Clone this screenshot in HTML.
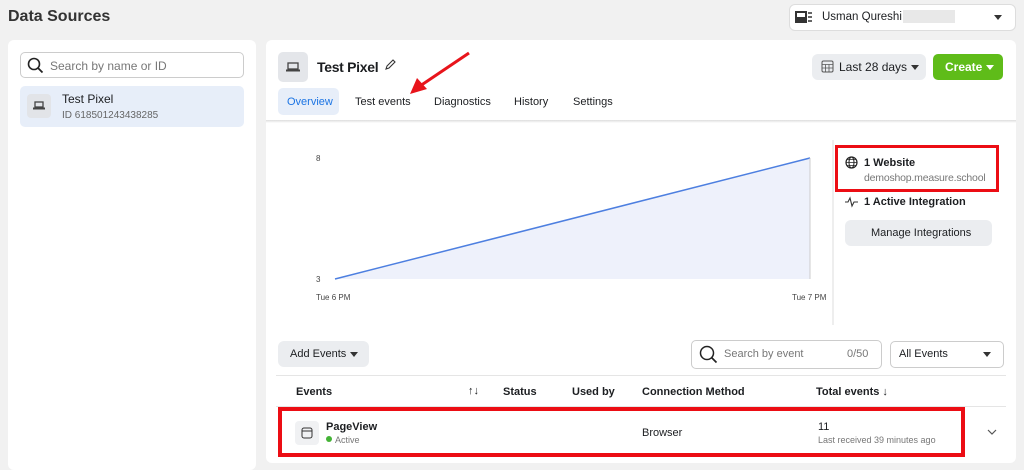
<!DOCTYPE html>
<html><head><style>
*{box-sizing:border-box;margin:0;padding:0}
body{width:1024px;height:467px;background:#f1f1f1;font-family:"Liberation Sans",sans-serif;color:#1c1e21;position:relative;overflow:hidden;font-size:12px}
.a{position:absolute;white-space:nowrap}
.card{background:#fff;border-radius:6px}
.b{font-weight:bold}
.btn{background:#ebedf0;border-radius:6px}
.tri{display:inline-block;width:0;height:0;border-left:4px solid transparent;border-right:4px solid transparent;border-top:5px solid #333}
</style></head><body>
<div class="a b" style="left:8px;top:8px;font-size:16px;color:#333">Data Sources</div>
<div class="a card" style="left:789px;top:4px;width:227px;height:27px;border:1px solid #ddd"></div>
<svg class="a" style="left:795px;top:11px" width="18" height="13"><rect x="1" y="1" width="10" height="10" fill="none" stroke="#333" stroke-width="2"/><rect x="2" y="6" width="8" height="4" fill="#333"/><path d="M13 2h4M13 6h4M13 10h4" stroke="#333" stroke-width="1.5"/></svg>
<div class="a" style="left:822px;top:11px;font-size:11.5px">Usman Qureshi</div>
<div class="a" style="left:903px;top:10px;width:52px;height:13px;background:#e8e8e8"></div>
<div class="a tri" style="left:994px;top:15px"></div>

<div class="a card" style="left:8px;top:40px;width:248px;height:430px"></div>
<div class="a" style="left:20px;top:52px;width:224px;height:26px;border:1px solid #ccc;border-radius:5px"></div>
<svg class="a" style="left:27px;top:57px" width="17" height="17"><circle cx="7" cy="7" r="5.5" fill="none" stroke="#222" stroke-width="1.6"/><path d="M11 11l4.5 4.5" stroke="#222" stroke-width="1.8"/></svg>
<div class="a" style="left:50px;top:59px;color:#777;font-size:12px">Search by name or ID</div>
<div class="a" style="left:20px;top:86px;width:224px;height:41px;background:#e7eef9;border-radius:5px"></div>
<div class="a" style="left:27px;top:94px;width:24px;height:24px;background:#e2e4e8;border-radius:4px"></div>
<svg class="a" style="left:33px;top:101px" width="12" height="9"><rect x="2" y="1" width="8" height="5" fill="none" stroke="#444" stroke-width="1.3"/><rect x="0" y="6.5" width="12" height="2" fill="#444"/></svg>
<div class="a" style="left:62px;top:92px;font-size:12px">Test Pixel</div>
<div class="a" style="left:62px;top:110px;font-size:10px;color:#666">ID 618501243438285</div>

<div class="a card" style="left:266px;top:40px;width:750px;height:423px"></div>
<div class="a" style="left:266px;top:120px;width:750px;height:3px;background:linear-gradient(#ddd,#fff)"></div>
<div class="a" style="left:278px;top:52px;width:30px;height:30px;background:#e4e6ea;border-radius:5px"></div>
<svg class="a" style="left:286px;top:62px" width="14" height="10"><rect x="2" y="1" width="10" height="6" fill="none" stroke="#444" stroke-width="1.3"/><rect x="0" y="7.5" width="14" height="2" fill="#444"/></svg>
<div class="a b" style="left:317px;top:59px;font-size:14px;letter-spacing:-0.3px">Test Pixel</div>
<svg class="a" style="left:384px;top:58px" width="13" height="13"><path d="M2 11l1-3 6-6 2 2-6 6z" fill="none" stroke="#333" stroke-width="1.1"/></svg>
<div class="a btn" style="left:812px;top:54px;width:114px;height:26px"></div>
<svg class="a" style="left:821px;top:60px" width="13" height="13"><rect x="1" y="1" width="11" height="11" rx="1.5" fill="none" stroke="#555"/><path d="M1 4.5h11M1 8h11M4.5 4.5v7.5M8 4.5v7.5" stroke="#555" stroke-width=".8"/></svg>
<div class="a" style="left:839px;top:60px;font-size:12px">Last 28 days</div>
<div class="a tri" style="left:911px;top:65px"></div>
<div class="a" style="left:933px;top:54px;width:70px;height:26px;background:#5fbc19;border-radius:5px"></div>
<div class="a b" style="left:945px;top:60px;color:#fff;font-size:12px">Create</div>
<div class="a tri" style="left:986px;top:65px;border-top-color:#fff"></div>
<div class="a" style="left:278px;top:88px;width:61px;height:27px;background:#e7eef9;border-radius:5px"></div>
<div class="a" style="left:287px;top:96px;color:#1b74e4;font-size:11px">Overview</div>
<div class="a" style="left:355px;top:96px;font-size:11px">Test events</div>
<div class="a" style="left:434px;top:96px;font-size:11px">Diagnostics</div>
<div class="a" style="left:514px;top:96px;font-size:11px">History</div>
<div class="a" style="left:573px;top:96px;font-size:11px">Settings</div>
<svg class="a" style="left:400px;top:50px" width="80" height="50"><path d="M69 3L20 36" stroke="#e8141b" stroke-width="3"/><path d="M10 44l7-16 10 11z" fill="#e8141b"/></svg>

<svg class="a" style="left:266px;top:140px" width="570" height="190">
<path d="M69 139L544 18V139Z" fill="#eef1fb"/>
<path d="M69 139L544 18" stroke="#4d7fe0" stroke-width="1.5"/>
<path d="M544 18V139" stroke="#ccc"/>
<path d="M567 0V185" stroke="#ddd"/>
<text x="50" y="21" font-size="8" font-family="Liberation Sans" fill="#444">8</text>
<text x="50" y="142" font-size="8" font-family="Liberation Sans" fill="#444">3</text>
<text x="50" y="160" font-size="8" font-family="Liberation Sans" fill="#444">Tue 6 PM</text>
<text x="526" y="160" font-size="8" font-family="Liberation Sans" fill="#444">Tue 7 PM</text>
</svg>
<div class="a" style="left:835px;top:145px;width:164px;height:47px;border:3px solid #ec0d14"></div>
<svg class="a" style="left:845px;top:156px" width="13" height="13"><circle cx="6.5" cy="6.5" r="5.5" fill="none" stroke="#222" stroke-width="1.2"/><ellipse cx="6.5" cy="6.5" rx="2.5" ry="5.5" fill="none" stroke="#222"/><path d="M1 6.5h11M2 3.5h9M2 9.5h9" stroke="#222" stroke-width=".8"/></svg>
<div class="a b" style="left:864px;top:157px;font-size:11px">1 Website</div>
<div class="a" style="left:864px;top:172px;font-size:10.5px;color:#777;letter-spacing:-0.2px">demoshop.measure.school</div>
<svg class="a" style="left:845px;top:196px" width="13" height="12"><path d="M0 6h3l2-4 2 8 2-4h4" fill="none" stroke="#333" stroke-width="1.1"/></svg>
<div class="a b" style="left:864px;top:196px;font-size:11px">1 Active Integration</div>
<div class="a btn" style="left:845px;top:220px;width:147px;height:26px"></div>
<div class="a" style="left:871px;top:227px;font-size:11px">Manage Integrations</div>

<div class="a btn" style="left:278px;top:341px;width:91px;height:26px"></div>
<div class="a" style="left:290px;top:348px;font-size:11px">Add Events</div>
<div class="a tri" style="left:350px;top:352px"></div>
<div class="a" style="left:691px;top:340px;width:191px;height:29px;border:1px solid #ccc;border-radius:5px"></div>
<svg class="a" style="left:699px;top:345px" width="20" height="20"><circle cx="8" cy="8" r="6.5" fill="none" stroke="#222" stroke-width="1.5"/><path d="M12.5 12.5l5 5" stroke="#222" stroke-width="1.7"/></svg>
<div class="a" style="left:724px;top:348px;font-size:11px;color:#777">Search by event</div>
<div class="a" style="left:847px;top:348px;font-size:11px;color:#777">0/50</div>
<div class="a" style="left:890px;top:341px;width:114px;height:27px;border:1px solid #ccc;border-radius:5px"></div>
<div class="a" style="left:899px;top:348px;font-size:11px">All Events</div>
<div class="a tri" style="left:983px;top:352px"></div>
<div class="a" style="left:276px;top:375px;width:730px;height:1px;background:#e5e5e5"></div>
<div class="a b" style="left:296px;top:386px;font-size:11px">Events</div>
<div class="a" style="left:468px;top:385px;font-size:11px">↑↓</div>
<div class="a b" style="left:503px;top:386px;font-size:11px">Status</div>
<div class="a b" style="left:572px;top:386px;font-size:11px">Used by</div>
<div class="a b" style="left:642px;top:386px;font-size:11px">Connection Method</div>
<div class="a b" style="left:816px;top:386px;font-size:11px">Total events ↓</div>
<div class="a" style="left:276px;top:406px;width:730px;height:1px;background:#e5e5e5"></div>
<div class="a" style="left:278px;top:407px;width:687px;height:50px;border:4px solid #ec0d14"></div>
<div class="a" style="left:295px;top:421px;width:24px;height:24px;background:#f0f1f3;border-radius:4px"></div>
<svg class="a" style="left:301px;top:427px" width="12" height="12"><rect x="1" y="1" width="10" height="10" rx="2" fill="none" stroke="#333"/><path d="M1 4h10" stroke="#333"/></svg>
<div class="a b" style="left:326px;top:421px;font-size:11px">PageView</div>
<div class="a" style="left:326px;top:436px;width:6px;height:6px;border-radius:3px;background:#44b336"></div>
<div class="a" style="left:335px;top:435px;font-size:9px;color:#777">Active</div>
<div class="a" style="left:642px;top:427px;font-size:11px">Browser</div>
<div class="a" style="left:818px;top:421px;font-size:11px">11</div>
<div class="a" style="left:818px;top:435px;font-size:9px;color:#777">Last received 39 minutes ago</div>
<svg class="a" style="left:987px;top:429px" width="10" height="7"><path d="M1 1l4 4 4-4" fill="none" stroke="#555" stroke-width="1.2"/></svg>
</body></html>
